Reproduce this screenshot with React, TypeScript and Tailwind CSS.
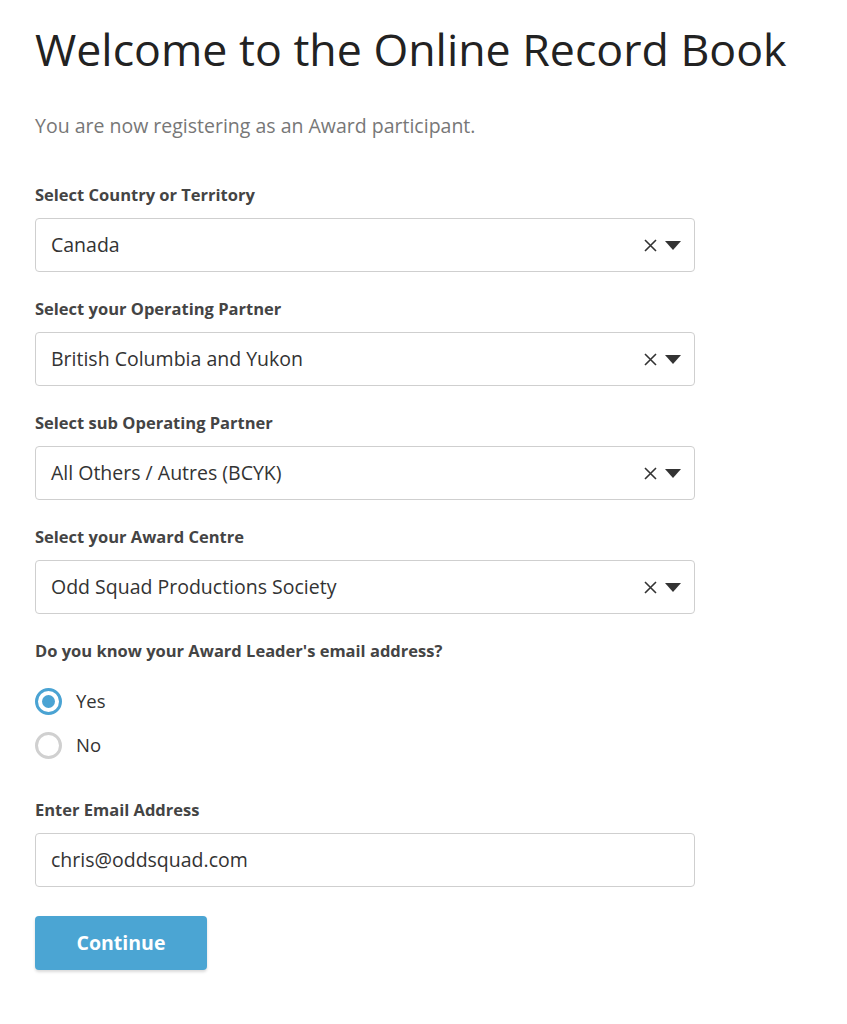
import React from "react";

function Chevron() {
  return (
    <div className="flex items-center gap-[8px] text-[#333]">
      <svg width="13" height="13" viewBox="0 0 13 13" className="block">
        <path d="M1 1 L12 12 M12 1 L1 12" stroke="#333" strokeWidth="1.6" fill="none" />
      </svg>
      <svg width="16" height="9" viewBox="0 0 16 9" className="block">
        <path d="M0 0 L16 0 L8 9 Z" fill="#333" />
      </svg>
    </div>
  );
}

function SelectField({ label, value }: { label: string; value: string }) {
  return (
    <div className="mb-[24px]">
      <div className="text-[16.5px] font-bold text-[#444] leading-[22px] pt-[2px] mb-[12px]">{label}</div>
      <div className="w-[660px] h-[54px] border border-[#cfcfcf] rounded-[4px] flex items-center justify-between pl-[15px] pr-[13px] bg-white">
        <span className="text-[19.5px] text-[#333]">{value}</span>
        <Chevron />
      </div>
    </div>
  );
}

function Radio({ checked, label }: { checked: boolean; label: string }) {
  return (
    <div className="flex items-center h-[44px]">
      <div
        className={
          checked
            ? "w-[27px] h-[27px] rounded-full border-[3px] border-[#4aa3d3] flex items-center justify-center"
            : "w-[27px] h-[27px] rounded-full border-[3px] border-[#d0d0d0]"
        }
      >
        {checked && <div className="w-[13px] h-[13px] rounded-full bg-[#4aa3d3]" />}
      </div>
      <span className="ml-[14px] text-[18.5px] text-[#333]">{label}</span>
    </div>
  );
}

export default function App() {
  return (
    <div
      className="min-h-screen bg-white px-[35px] pt-[22px]"
      style={{ fontFamily: '"Open Sans", "Noto Sans", sans-serif' }}
    >
      <h1 className="text-[44.7px] leading-[54px] text-[#222] font-normal">Welcome to the Online Record Book</h1>
      <p className="text-[19.5px] text-[#777] mt-[38px] mb-[44px] leading-[24px]">You are now registering as an Award participant.</p>
      <SelectField label="Select Country or Territory" value="Canada" />
      <SelectField label="Select your Operating Partner" value="British Columbia and Yukon" />
      <SelectField label="Select sub Operating Partner" value="All Others / Autres (BCYK)" />
      <SelectField label="Select your Award Centre" value="Odd Squad Productions Society" />
      <div className="text-[16.5px] font-bold text-[#444] leading-[22px] pt-[2px] mb-[17px]">Do you know your Award Leader's email address?</div>
      <Radio checked label="Yes" />
      <Radio checked={false} label="No" />
      <div className="text-[16.5px] font-bold text-[#444] leading-[22px] mt-[29px] pt-[3px] mb-[12px]">Enter Email Address</div>
      <div className="w-[660px] h-[54px] border border-[#cfcfcf] rounded-[4px] flex items-center pl-[15px] bg-white">
        <span className="text-[19.5px] text-[#333]">chris@oddsquad.com</span>
      </div>
      <button className="mt-[29px] w-[172px] h-[54px] rounded-[4px] bg-[#4ba5d3] text-white text-[19.5px] font-bold shadow-[0_2px_3px_rgba(0,0,0,0.15)]">
        Continue
      </button>
    </div>
  );
}
